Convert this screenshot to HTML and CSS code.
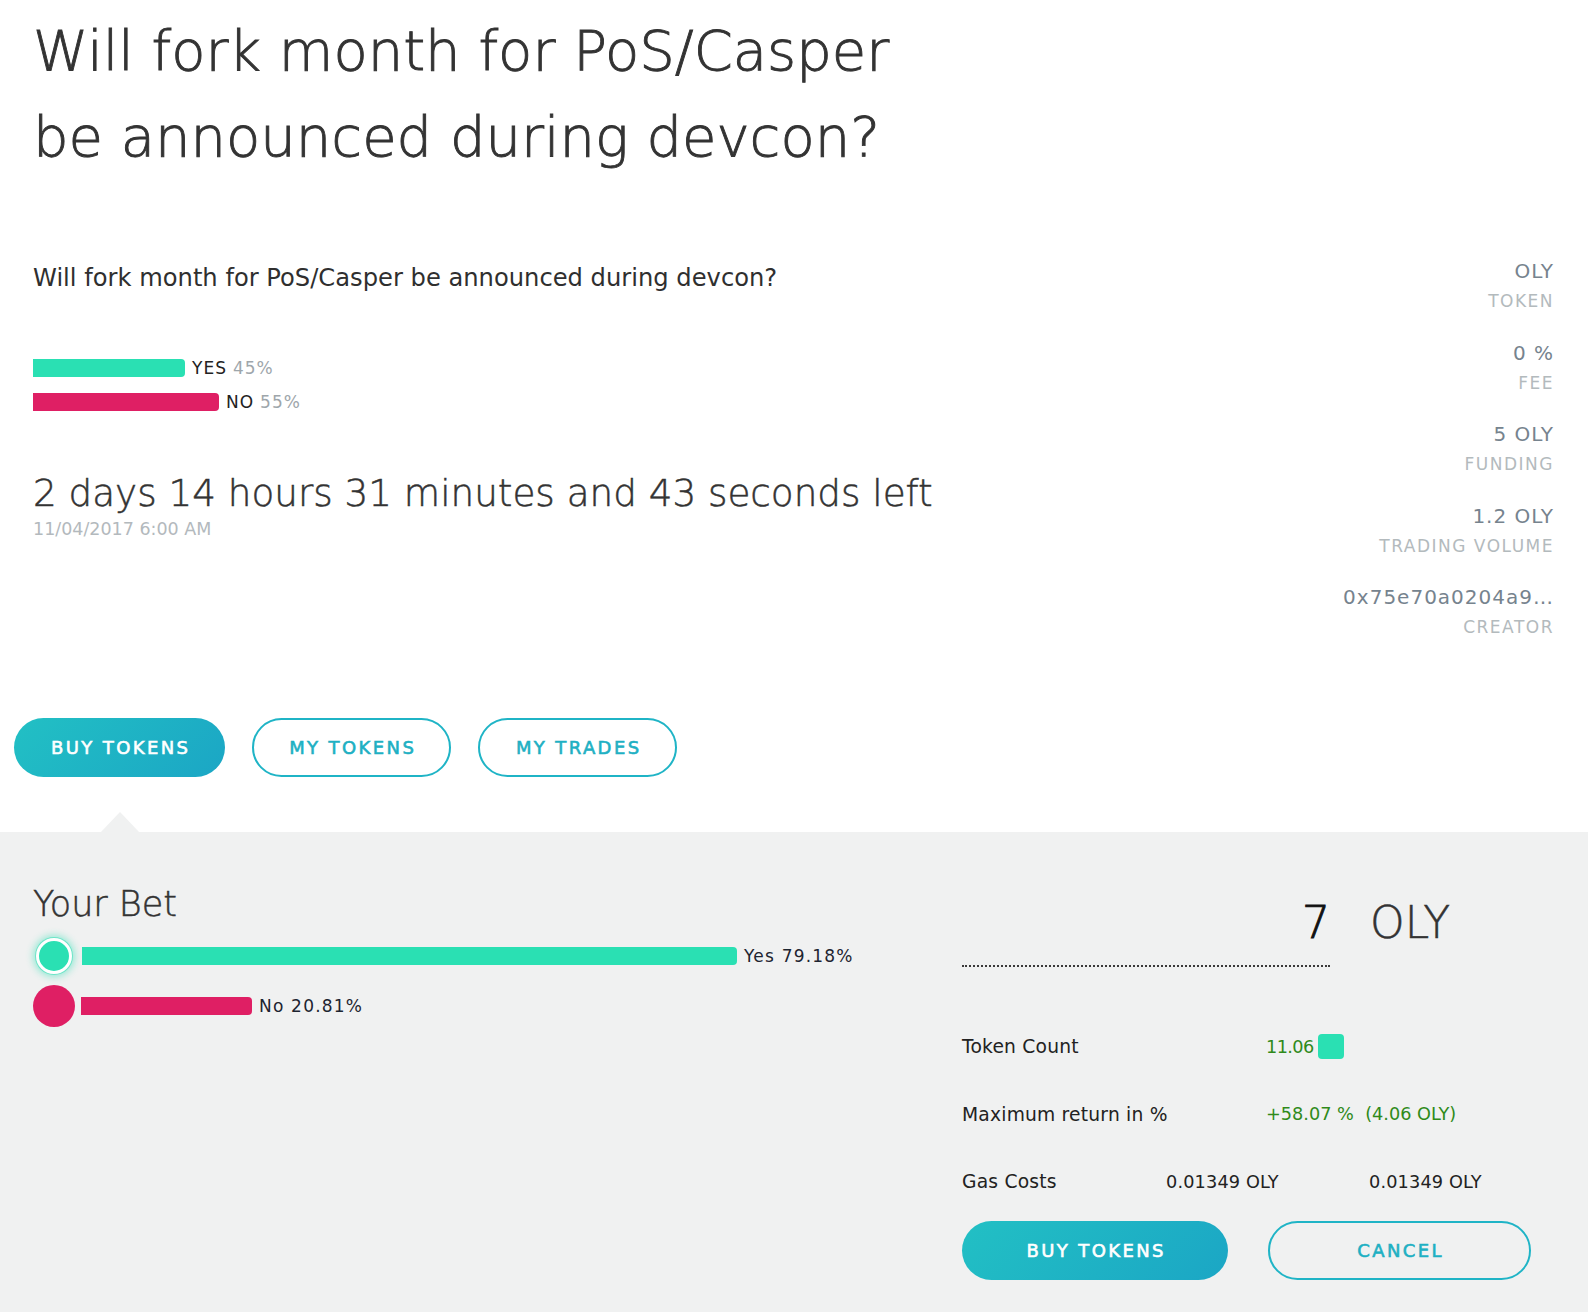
FILE: index.html
```
<!DOCTYPE html>
<html lang="en">
<head>
<meta charset="utf-8">
<title>Will fork month for PoS/Casper be announced during devcon?</title>
<link rel="stylesheet" href="styles.css">
</head>
<body>
<main class="market">
  <h1 class="market-title">Will fork month for PoS/Casper<br>be announced during devcon?</h1>

  <section class="overview">
    <div class="overview-main">
      <p class="question">Will fork month for PoS/Casper be announced during devcon?</p>
      <div class="outcomes">
        <div class="outcome">
          <span class="outcome-bar outcome-bar--yes" style="width:152px"></span>
          <span class="outcome-name">YES</span>
          <span class="outcome-pct">45%</span>
        </div>
        <div class="outcome">
          <span class="outcome-bar outcome-bar--no" style="width:186px"></span>
          <span class="outcome-name">NO</span>
          <span class="outcome-pct">55%</span>
        </div>
      </div>
      <div class="countdown">2 days 14 hours 31 minutes and 43 seconds left</div>
      <div class="resolution-date">11/04/2017 6:00 AM</div>
    </div>

    <div class="stats">
      <div class="stat"><span class="stat-value">OLY</span><span class="stat-label">TOKEN</span></div>
      <div class="stat"><span class="stat-value">0 %</span><span class="stat-label">FEE</span></div>
      <div class="stat"><span class="stat-value">5 OLY</span><span class="stat-label">FUNDING</span></div>
      <div class="stat"><span class="stat-value">1.2 OLY</span><span class="stat-label">TRADING VOLUME</span></div>
      <div class="stat"><span class="stat-value">0x75e70a0204a9…</span><span class="stat-label">CREATOR</span></div>
    </div>
  </section>

  <nav class="tabs">
    <button class="tab tab--active" type="button">BUY TOKENS</button>
    <button class="tab" type="button">MY TOKENS</button>
    <button class="tab" type="button">MY TRADES</button>
  </nav>

  <section class="bet-panel">
    <div class="bet-chart">
      <h2 class="bet-title">Your Bet</h2>
      <div class="bet-rows">
        <div class="bet-row">
          <span class="bet-dot bet-dot--yes"></span>
          <span class="bet-bar bet-bar--yes" style="width:655px"></span>
          <span class="bet-label">Yes 79.18%</span>
        </div>
        <div class="bet-row">
          <span class="bet-dot bet-dot--no"></span>
          <span class="bet-bar bet-bar--no" style="width:171px"></span>
          <span class="bet-label">No 20.81%</span>
        </div>
      </div>
    </div>

    <div class="bet-form">
      <div class="amount">
        <div class="amount-input">7</div>
        <span class="amount-unit">OLY</span>
      </div>

      <div class="details">
        <span class="details-label">Token Count</span>
        <span class="details-value details-value--gain"><span class="token-count">11.06</span><span class="token-swatch"></span></span>

        <span class="details-label">Maximum return in %</span>
        <span class="details-value details-value--gain">+58.07 %&nbsp;&nbsp;(4.06 OLY)</span>

        <span class="details-label">Gas Costs</span>
        <span class="details-gas">0.01349 OLY</span>
        <span class="details-gas details-gas--total">0.01349 OLY</span>
      </div>

      <div class="actions">
        <button class="btn btn--primary" type="button">BUY TOKENS</button>
        <button class="btn btn--secondary" type="button">CANCEL</button>
      </div>
    </div>
  </section>
</main>
</body>
</html>
```

FILE: styles.css
```
* {
  box-sizing: border-box;
}

html,
body {
  margin: 0;
  padding: 0;
  background: #ffffff;
}

body {
  width: 1588px;
  height: 1312px;
  overflow: hidden;
  font-family: "DejaVu Sans", "Liberation Sans", sans-serif;
  color: #333333;
}

.market-title {
  margin: 8px 0 0;
  padding-left: 33px;
  font-size: 56px;
  line-height: 86px;
  font-weight: 200;
  -webkit-text-stroke: 0.9px #333333;
  color: #333333;
}

/* ---------- overview ---------- */
.overview {
  display: flex;
  justify-content: space-between;
  align-items: flex-start;
  margin-top: 79px;
  padding: 0 34px 0 33px;
}

.overview-main {
  padding-top: 4px;
}

.question {
  margin: 0;
  font-size: 24.2px;
  line-height: 30px;
  color: #2f2f2f;
}

.outcomes {
  margin-top: 66px;
  display: flex;
  flex-direction: column;
  gap: 16px;
}

.outcome {
  display: flex;
  align-items: center;
  height: 18px;
  font-size: 17px;
  letter-spacing: 1px;
}

.outcome-bar {
  height: 18px;
  margin-right: 7px;
  border-radius: 0 4px 4px 0;
}

.outcome-bar--yes,
.bet-bar--yes {
  background: #2ae0b3;
}

.outcome-bar--no,
.bet-bar--no {
  background: #df1f64;
}

.outcome-name {
  color: #222222;
}

.outcome-pct {
  margin-left: 6px;
  color: #9ea6ab;
}

.countdown {
  margin-top: 60px;
  font-size: 37.3px;
  line-height: 44px;
  font-weight: 200;
  -webkit-text-stroke: 0.5px #333333;
  color: #333333;
}

.resolution-date {
  margin-top: 3px;
  font-size: 17.5px;
  line-height: 22px;
  color: #b3b9bd;
}

.stats {
  display: flex;
  flex-direction: column;
  gap: 27.6px;
  text-align: right;
}

.stat {
  display: flex;
  flex-direction: column;
  align-items: flex-end;
}

.stat-value {
  font-size: 20px;
  line-height: 24px;
  letter-spacing: 1px;
  color: #76838e;
}

.stat-label {
  margin-top: 6px;
  font-size: 17px;
  line-height: 24px;
  letter-spacing: 1.5px;
  color: #b3babd;
}

/* ---------- tabs ---------- */
.tabs {
  display: flex;
  gap: 27px;
  margin-top: 78.6px;
  padding-left: 14px;
}

.tab,
.btn {
  height: 59px;
  border-radius: 30px;
  font-family: inherit;
  font-size: 18px;
  font-weight: 400;
  letter-spacing: 2.4px;
  padding: 0 0 0 2.4px;
  -webkit-text-stroke: 0.6px currentColor;
  cursor: pointer;
}

.tab {
  width: 199px;
  border: 2px solid #1fb4c6;
  background: #ffffff;
  color: #1eb0c3;
}

.tab--active,
.btn--primary {
  border: none;
  background: linear-gradient(135deg, #22c0c4 0%, #1ba6c5 100%);
  color: #ffffff;
}

.tab--active {
  width: 211px;
}

/* ---------- bet panel ---------- */
.bet-panel {
  position: relative;
  display: flex;
  min-height: 480px;
  margin-top: 55px;
  padding: 52px 0 33px 33px;
  background: #f0f1f1;
}

.bet-panel::before {
  content: "";
  position: absolute;
  top: -20px;
  left: 101px;
  border-left: 19px solid transparent;
  border-right: 19px solid transparent;
  border-bottom: 20px solid #f0f1f1;
}

.bet-chart {
  flex: none;
  width: 929px;
}

.bet-title {
  margin: 0;
  font-size: 35px;
  line-height: 40px;
  font-weight: 200;
  -webkit-text-stroke: 0.5px #333333;
  color: #333333;
}

.bet-rows {
  margin-top: 11px;
  display: flex;
  flex-direction: column;
  gap: 8px;
}

.bet-row {
  display: flex;
  align-items: center;
  height: 42px;
}

.bet-dot {
  flex: none;
  border-radius: 50%;
}

.bet-dot--yes {
  width: 36px;
  height: 36px;
  margin: 0 3px;
  background: #2ae0b3;
  border: 3px solid #ffffff;
  box-shadow: 0 0 0 1px rgba(42, 224, 179, 0.5), 0 0 7px 3px rgba(42, 224, 179, 0.45);
}

.bet-dot--no {
  width: 42px;
  height: 42px;
  background: #df1f64;
}

.bet-bar {
  height: 18px;
  margin-left: 6px;
  border-radius: 0 4px 4px 0;
}

.bet-dot--yes + .bet-bar {
  margin-left: 7px;
}

.bet-label {
  margin-left: 7px;
  font-size: 17px;
  letter-spacing: 1.2px;
  color: #1d2430;
}

.bet-form {
  flex: 1;
  padding-top: 13px;
}

.amount {
  display: flex;
  align-items: baseline;
}

.amount-input {
  width: 368px;
  padding-bottom: 16px;
  border-bottom: 2px dotted #3a3a3a;
  text-align: right;
  font-size: 44px;
  line-height: 52px;
  font-weight: 200;
  -webkit-text-stroke: 0.9px #111111;
  color: #111111;
}

.amount-unit {
  margin-left: 40px;
  font-size: 44px;
  line-height: 52px;
  font-weight: 200;
  -webkit-text-stroke: 0.5px #333333;
  color: #333333;
}

.details {
  margin-top: 68px;
  display: grid;
  grid-template-columns: 204px 100px 103px 1fr;
  grid-auto-rows: 24px;
  row-gap: 43.5px;
  align-items: center;
  font-size: 17.7px;
  letter-spacing: 0.15px;
  color: #222222;
}

.details-label {
  grid-column: 1;
  font-size: 18.7px;
  letter-spacing: 0.2px;
  white-space: nowrap;
}

.details-value {
  grid-column: 3 / 5;
  display: flex;
  align-items: center;
  white-space: nowrap;
}

.details-value--gain {
  color: #2f8a1a;
  letter-spacing: 0;
}

.token-count {
  letter-spacing: -0.6px;
}

.token-swatch {
  width: 26px;
  height: 25px;
  margin-left: 4px;
  border-radius: 4px;
  background: #2ae0b3;
}

.details-gas {
  grid-column: 2 / 4;
  white-space: nowrap;
}

.details-gas--total {
  grid-column: 4;
}

.actions {
  margin-top: 27px;
  display: flex;
  gap: 40px;
}

.btn--primary {
  width: 266px;
}

.btn--secondary {
  width: 263px;
  border: 2px solid #1fb4c6;
  background: transparent;
  color: #1eb0c3;
}
```
